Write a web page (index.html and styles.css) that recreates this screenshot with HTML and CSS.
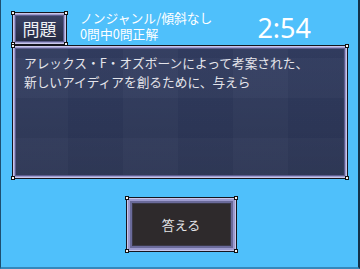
FILE: index.html
```html
<html>
<head>
<meta charset="UTF-8">
<link rel="stylesheet" href="styles.css">
<title>quiz</title>
</head>
<body>
  <div class="screen">
    <div class="head">
      <div class="panel tag">
        <i class="c tl"></i><i class="c tr"></i><i class="c bl"></i><i class="c br"></i>
        問題
      </div>
      <div class="info">
        <div>ノンジャンル/傾斜なし</div>
        <div>0問中0問正解</div>
      </div>
      <div class="timer">2:54</div>
    </div>

    <div class="panel question">
      <i class="c tl"></i><i class="c tr"></i><i class="c bl"></i><i class="c br"></i>
      <p>アレックス・F・オズボーンによって考案された、<br>新しいアイディアを創るために、与えら</p>
    </div>

    <div class="actions">
      <div class="panel answer">
        <i class="c tl"></i><i class="c tr"></i><i class="c bl"></i><i class="c br"></i>
        答える
      </div>
    </div>
  </div>
</body>
</html>
```

FILE: styles.css
```css
* {
  box-sizing: border-box;
}

body {
  margin: 0;
  font-family: "Noto Sans CJK JP", "Noto Sans", sans-serif;
}

.screen {
  width: 360px;
  height: 269px;
  background: #4fc0fb;
  border-left: 1px solid #1d4f70;
  border-right: 2px solid #12324a;
  border-bottom: 2px solid #3588bb;
  padding: 12px 10px 0 11px;
}

/* window frame shared by all panels */
.panel {
  position: relative;
  border: 1px solid #15151f;
  box-shadow: inset 0 0 0 1px #c9c7ea, inset 0 0 0 2px #9d9bcf, inset 0 0 0 3px #5c5c8c;
}
.c {
  position: absolute;
  width: 4px;
  height: 4px;
  background: #f4f4f4;
  border: 1px solid #111;
}
.tl { left: -2px; top: -2px; }
.tr { right: -2px; top: -2px; }
.bl { left: -2px; bottom: -2px; }
.br { right: -2px; bottom: -2px; }

.head {
  display: flex;
  align-items: flex-start;
  height: 33px;
}
.tag {
  width: 55px;
  height: 33px;
  background: linear-gradient(#3c4468, #23283f);
  color: #eef0f4;
  font-size: 17px;
  line-height: 31px;
  text-align: center;
}
.info {
  margin-left: 13px;
  margin-top: -2px;
  color: #fff;
  font-size: 12.8px;
  line-height: 16px;
}
.timer {
  margin-left: auto;
  margin-right: 37px;
  color: #fff;
  font-family: "Noto Sans", sans-serif;
  font-size: 27px;
  line-height: 31px;
}

.question {
  height: 134px;
  background:
    linear-gradient(rgba(0,0,0,0), rgba(0,0,0,0.14)),
    repeating-linear-gradient(90deg, rgba(255,255,255,0.02) 0 55px, rgba(0,0,0,0.015) 55px 110px),
    repeating-linear-gradient(0deg, rgba(255,255,255,0.02) 0 40px, rgba(0,0,0,0.02) 40px 80px),
    #323d61;
}
.question p {
  margin: 0;
  padding: 7px 10px 0 11px;
  color: #e4e4ea;
  font-size: 12.7px;
  line-height: 19px;
}

.actions {
  display: flex;
  justify-content: center;
  padding-top: 18px;
}
.answer {
  width: 111px;
  height: 55px;
  margin-left: 2px;
  background: #2e2a2c;
  box-shadow: inset 0 0 0 1px #c9c7ea, inset 0 0 0 3px #9d9bcf, inset 0 0 0 5px #6a6a9a, inset 0 0 0 6px #3a3848;
  color: #e2e2e6;
  font-size: 13px;
  line-height: 53px;
  text-align: center;
}
```
